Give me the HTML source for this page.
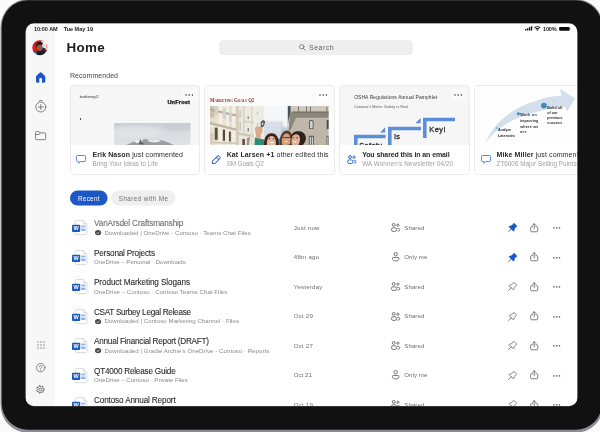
<!DOCTYPE html>
<html lang="en"><head><meta charset="utf-8"><title>Home</title>
<style>
*{margin:0;padding:0;box-sizing:border-box}
html,body{width:600px;height:432px;overflow:hidden}
body{background:#fafafa;font-family:"Liberation Sans",sans-serif;position:relative;color:#222}
.abs{position:absolute}
.t{position:absolute;white-space:nowrap;line-height:1}
#screen{position:absolute;left:25px;top:23px;width:553px;height:384px;background:#fff;overflow:hidden}
#in{position:absolute;left:-25px;top:-23px;width:600px;height:432px;will-change:transform}
#side{position:absolute;left:25px;top:23px;width:29.8px;height:384px;background:#f7f7f7}
.card{position:absolute;top:84.65px;width:130.3px;height:90.25px;border-radius:4px;background:#fff;overflow:hidden}
.card:after{content:'';position:absolute;left:0;top:0;right:0;bottom:0;border:.8px solid #ebebeb;border-radius:4px}
.ci{position:absolute;left:.35px;top:.85px;width:130px;height:90px}
.thumb{position:absolute;left:0;top:0;width:100%;height:60.1px;background:#f6f6f6;overflow:hidden}
.pill{position:absolute;top:190.5px;height:15px;border-radius:7.5px}
svg{position:absolute;overflow:visible}
</style></head>
<body>
<div id="screen"><div id="in">
<div id="side"></div>
<div class="t" id="st1" style="left:34px;top:26.85px;font-size:5.5px;color:#1a1a1a;font-weight:700;letter-spacing:-0.037px;">10:00 AM</div>
<div class="t" id="st2" style="left:63.7px;top:26.85px;font-size:5.5px;color:#1a1a1a;font-weight:700;letter-spacing:0.005px;">Tue May 19</div>
<div class="t" id="st3" style="left:543px;top:26.85px;font-size:5.5px;color:#1a1a1a;font-weight:700;letter-spacing:-0.123px;">100%</div>
<svg style="left:525px;top:26.2px" width="8" height="5" viewBox="0 0 8 5"><g fill="#111"><rect x="0" y="3" width="1.4" height="1.6" rx=".3"/><rect x="1.95" y="2.2" width="1.4" height="2.4" rx=".3"/><rect x="3.9" y="1.2" width="1.4" height="3.4" rx=".3"/><rect x="5.85" y="0.2" width="1.4" height="4.4" rx=".3"/></g></svg>
<svg style="left:534.4px;top:26.2px" width="6.6" height="5" viewBox="0 0 13.2 10"><g fill="none" stroke="#111" stroke-width="2.1" stroke-linecap="butt"><path d="M1 3.7 A8 8 0 0 1 12.2 3.7"/><path d="M3.3 6.1 A4.8 4.8 0 0 1 9.9 6.1"/></g><path d="M6.6 10 L4.5 7.7 A3 3 0 0 1 8.7 7.7 Z" fill="#111"/></svg>
<svg style="left:558.6px;top:27.2px" width="13" height="4" viewBox="0 0 13 4"><rect x="0.1" y="0.1" width="10.6" height="3.7" rx="1" fill="#0a0a0a"/><path d="M11.1 1.2 a.9 .9 0 0 1 0 1.5z" fill="#777"/></svg>
<svg style="left:32px;top:39.5px" width="15.6" height="15.6" viewBox="0 0 31.2 31.2">
<defs><clipPath id="avc"><circle cx="15.6" cy="15.6" r="15"/></clipPath><filter id="avb"><feGaussianBlur stdDeviation="0.9"/></filter></defs>
<circle cx="15.6" cy="15.6" r="15.6" fill="#ececec"/>
<g clip-path="url(#avc)"><g filter="url(#avb)">
<rect x="0" y="0" width="32" height="32" fill="#e2141c"/>
<path d="M18 2 L28 4 L30 20 L22 17 Z" fill="#f2f2f2"/>
<path d="M8 10 C9 2 21 1 22.6 9 L22.6 15 L8.6 15 Z" fill="#1b1412"/>
<ellipse cx="15.2" cy="16" rx="5.6" ry="6.8" fill="#8f5d48"/>
<path d="M9.8 17 C10.6 21 12 22 15 22 C18 22 19.8 21 20.6 17 L20.6 22 C18 28 12 27.6 9.8 22 Z" fill="#2a1a14"/>
<path d="M19.6 8 L25 9 L26 21 L21.4 19 Z" fill="#d8d8dc"/>
<path d="M21 15 L27 17 L28 30 L19 29 Z" fill="#1d2a3e"/>
<path d="M5 23 L13 25 L19 25 L25 23 L27 32 L3 32 Z" fill="#15181f"/>
<path d="M4.6 24 L9 23.4 L10.4 28 L6 29 Z" fill="#2f7fc4"/>
</g></g></svg>
<svg style="left:35.8px;top:72px" width="9.3" height="10.7" preserveAspectRatio="none" viewBox="0 0 19.6 21.4"><path d="M9.8 0.4 C8.9 0.4 8.3 0.8 7.6 1.4 L1.6 6.8 C0.6 7.7 0 8.7 0 10.2 V18.6 C0 20.3 1.1 21.4 2.8 21.4 H5 C6.4 21.4 7 20.6 7 19.4 V13.6 C7 12.6 7.6 12 8.6 12 H11 C12 12 12.6 12.6 12.6 13.6 V19.4 C12.6 20.6 13.2 21.4 14.6 21.4 H16.8 C18.5 21.4 19.6 20.3 19.6 18.6 V10.2 C19.6 8.7 19 7.7 18 6.8 L12 1.4 C11.3 0.8 10.7 0.4 9.8 0.4 Z" fill="#1b57c6"/></svg>
<svg style="left:35px;top:100.2px" width="11.6" height="12.6" viewBox="0 0 23.2 25.2"><g fill="none" stroke="#5a5a5a" stroke-width="1.5" stroke-linecap="round"><circle cx="11.6" cy="14" r="10"/><path d="M11.6 9.2 V18.8 M6.8 14 H16.4"/><path d="M8.6 1.6 C10.4 0.7 12.8 0.7 14.6 1.6"/></g></svg>
<svg style="left:35px;top:131.2px" width="11.2" height="9.2" preserveAspectRatio="none" viewBox="0 0 23.6 18.4"><path d="M1 3 C1 1.9 1.9 1 3 1 H8.2 L10.6 3.8 H20.6 C21.7 3.8 22.6 4.7 22.6 5.8 V15.4 C22.6 16.5 21.7 17.4 20.6 17.4 H3 C1.9 17.4 1 16.5 1 15.4 Z M1 7 H9 L11 4" fill="none" stroke="#5a5a5a" stroke-width="1.5" stroke-linejoin="round"/></svg>
<svg style="left:36.8px;top:341.3px" width="8" height="8" viewBox="0 0 16 16"><g fill="#707070"><circle cx="2" cy="2" r="1.35"/><circle cx="2" cy="8" r="1.35"/><circle cx="2" cy="14" r="1.35"/><circle cx="8" cy="2" r="1.35"/><circle cx="8" cy="8" r="1.35"/><circle cx="8" cy="14" r="1.35"/><circle cx="14" cy="2" r="1.35"/><circle cx="14" cy="8" r="1.35"/><circle cx="14" cy="14" r="1.35"/></g></svg>
<svg style="left:36.1px;top:362.9px" width="9.4" height="9.4" viewBox="0 0 18.8 18.8"><g fill="none" stroke="#5a5a5a" stroke-width="1.4" stroke-linecap="round"><circle cx="9.4" cy="9.4" r="8.4"/><path d="M6.9 7.4 C6.9 4.2 11.9 4.2 11.9 7.3 C11.9 9.3 9.4 9.3 9.4 11.4"/></g><circle cx="9.4" cy="13.9" r="1" fill="#5a5a5a"/></svg>
<svg style="left:36.2px;top:385.3px" width="8.8" height="8.8" viewBox="0 0 20 20"><g fill="none" stroke="#5a5a5a" stroke-width="1.9" stroke-linejoin="round"><path d="M18.70 8.68 L18.70 11.32 L16.12 11.88 L15.29 13.61 L16.45 15.98 L14.40 17.62 L12.34 15.96 L10.48 16.38 L9.35 18.78 L6.78 18.19 L6.80 15.54 L5.31 14.35 L2.73 14.96 L1.59 12.59 L3.67 10.96 L3.67 9.04 L1.59 7.41 L2.73 5.04 L5.31 5.65 L6.80 4.46 L6.78 1.81 L9.35 1.22 L10.48 3.62 L12.34 4.04 L14.40 2.38 L16.45 4.02 L15.29 6.39 L16.12 8.12 Z"/><circle cx="10" cy="10" r="3"/></g></svg>
<div class="t" id="home" style="left:66.4px;top:41.10px;font-size:13.4px;color:#1d1d1d;font-weight:700;letter-spacing:0.331px;">Home</div>
<div class="abs" style="left:219.2px;top:39.7px;width:194px;height:15.2px;border-radius:4.5px;background:#efefef"></div>
<svg style="left:298.8px;top:44px" width="6.8" height="6.8" viewBox="0 0 13.2 13.2"><g fill="none" stroke="#6a6a6a" stroke-width="1.5" stroke-linecap="round"><circle cx="5.4" cy="5.4" r="4.2"/><path d="M8.6 8.6 L12.2 12.2"/></g></svg>
<div class="t" id="search" style="left:309px;top:44.25px;font-size:7px;color:#5e5e5e;font-weight:400;letter-spacing:0.482px;">Search</div>
<div class="t" id="reco" style="left:70px;top:71.65px;font-size:7px;color:#444;font-weight:400;letter-spacing:0.052px;">Recommended</div>
<div class="card" style="left:69.65px;width:130.3px"><div class="thumb" style="background:#f6f6f6"><div class="ci">
<div class="t" id="c1a" style="left:9.7px;top:11.30px;font-size:2.6px;color:#333;font-weight:400;letter-spacing:-0.008px;">brandhomepg12</div>
<div class="abs" style="left:112.3px;top:3.8px;width:14.4px;height:11.4px;border-radius:3px;background:#fafafa"></div>
<div class="t" id="c1b" style="left:97.4px;top:14.50px;font-size:5.6px;color:#111;font-weight:700;letter-spacing:0.193px;-webkit-text-stroke:.25px #111;">UnFrost</div>
<div class="abs" style="left:9.6px;top:33px;width:.8px;height:1.6px;background:#555"></div>
<svg style="left:44px;top:37.8px" width="76.4" height="23" viewBox="0 0 76.4 23"><defs>
<linearGradient id="sky1" x1="0" y1="0" x2="0" y2="1"><stop offset="0" stop-color="#cbcfd3"/><stop offset=".5" stop-color="#dadde0"/><stop offset="1" stop-color="#e0e3e6"/></linearGradient>
<filter id="b1" x="-10%" y="-10%" width="120%" height="120%"><feGaussianBlur stdDeviation="1.2"/></filter><filter id="b1m" x="-10%" y="-10%" width="120%" height="120%"><feGaussianBlur stdDeviation=".5"/></filter><clipPath id="cp1"><rect width="76.4" height="23"/></clipPath></defs>
<rect width="76.4" height="23" fill="url(#sky1)"/>
<g clip-path="url(#cp1)"><g filter="url(#b1)">
<ellipse cx="22" cy="9" rx="26" ry="6" fill="#e4e6e9" opacity=".6"/><ellipse cx="66" cy="3" rx="18" ry="5" fill="#c6cacf" opacity=".6"/>
</g><g filter="url(#b1m)"><path d="M12 22 L20 18.6 L26 15.4 L29 16.6 L33 15.8 L38 17.6 L44 16.4 L52 18.6 L60 22 Z" fill="#9a9ea3"/>
<path d="M20 18.6 L26 15.4 L29 16.6 L27 19 L23 20 Z" fill="#f4f5f6"/>
<path d="M33 15.8 L38 17.6 L44 16.4 L47 18.4 L40 19.6 L35 18.6 Z" fill="#eceef0"/>
<path d="M26 15.6 L28 19.6 L31 21.2 L25 21.2 Z" fill="#5d6166"/>
</g></g></svg>
<svg style="left:114.8px;top:8.6px" width="8.4" height="2" viewBox="0 0 8.4 2"><g fill="#222"><circle cx="1" cy="1" r=".72"/><circle cx="4.2" cy="1" r=".72"/><circle cx="7.4" cy="1" r=".72"/></g></svg>
</div></div><div class="ci">
<svg style="left:6px;top:69.6px" width="10" height="9" viewBox="0 0 20 18"><path d="M3 1 H17 C18.1 1 19 1.9 19 3 V11 C19 12.1 18.1 13 17 13 H9.5 L5.5 16.6 V13 H3 C1.9 13 1 12.1 1 11 V3 C1 1.9 1.9 1 3 1 Z" fill="none" stroke="#3369cf" stroke-width="1.6" stroke-linejoin="round"/></svg>
<div class="t" id="c1t" style="left:22.5px;top:65.35px;font-size:7px;color:#2a2a2a;font-weight:400;letter-spacing:0.107px;"><b>Erik Nason</b> just commented</div>
<div class="t" id="c1s" style="left:22.5px;top:75.33px;font-size:6.3px;color:#a0a0a0;font-weight:400;letter-spacing:0.016px;">Bring Your Ideas to Life</div>
</div></div>
<div class="card" style="left:204.3px;width:130.3px"><div class="thumb" style="background:#fbfbfb"><div class="ci">
<div class="t" id="c2a" style="left:5.85px;top:11.80px;font-size:7px;color:#8a2d29;font-weight:700;letter-spacing:-0.038px;font-family:'Liberation Serif',serif;transform-origin:0 50%;transform:scaleX(0.683);">M<span style="font-size:5px">ARKETING</span> G<span style="font-size:5px">OALS</span> Q2</div>
<div class="abs" style="left:112.3px;top:3.8px;width:14.4px;height:11.4px;border-radius:3px;background:#fff"></div>
<svg style="left:114.8px;top:8.6px" width="8.4" height="2" viewBox="0 0 8.4 2"><g fill="#222"><circle cx="1" cy="1" r=".72"/><circle cx="4.2" cy="1" r=".72"/><circle cx="7.4" cy="1" r=".72"/></g></svg>
<svg style="left:5.5px;top:20.8px" width="118.8" height="40" viewBox="0 0 118.8 40"><defs>
<filter id="pb" x="-5%" y="-5%" width="110%" height="110%"><feGaussianBlur stdDeviation=".6"/></filter>
<filter id="pb2" x="-5%" y="-5%" width="110%" height="110%"><feGaussianBlur stdDeviation=".9"/></filter>
<clipPath id="pc"><rect width="118.8" height="40"/></clipPath>
<linearGradient id="bl1" x1="0" y1="0" x2="1" y2="0"><stop offset="0" stop-color="#e6decd"/><stop offset=".5" stop-color="#ece6d8"/><stop offset="1" stop-color="#e3dccb"/></linearGradient>
<linearGradient id="bl2" x1="0" y1="0" x2="1" y2="0"><stop offset="0" stop-color="#e9e4d7"/><stop offset="1" stop-color="#eeece6"/></linearGradient>
</defs>
<g clip-path="url(#pc)">
<rect width="118.8" height="40" fill="#f5f6f7"/>
<g filter="url(#pb2)">
<!-- far pale blue building -->
<rect x="53" y="15.5" width="20" height="26" fill="#d3dae4"/>
<rect x="71" y="21" width="8" height="20" fill="#bccada"/>
<g fill="#e6ebf1"><rect x="56" y="18" width="2" height="2.4"/><rect x="60" y="18" width="2" height="2.4"/><rect x="64" y="18" width="2" height="2.4"/><rect x="68" y="18" width="2" height="2.4"/><rect x="56" y="23" width="2" height="2.4"/><rect x="60" y="23" width="2" height="2.4"/><rect x="64" y="23" width="2" height="2.4"/><rect x="68" y="23" width="2" height="2.4"/></g>
</g>
<g filter="url(#pb)">
<!-- left buildings -->
<path d="M44 0 H54 V40 H44 Z" fill="#ecebe6"/>
<path d="M25 0 H46 V40 H25 Z" fill="url(#bl2)"/>
<path d="M0 0 H26.5 V40 H0 Z" fill="url(#bl1)"/>
<g fill="#f4f0e7"><rect x="9" y="0" width="3" height="40"/><rect x="16.4" y="0" width="2.4" height="40"/><rect x="22.2" y="0" width="3" height="40"/></g>
<path d="M0 0 H4.4 V12 L0 11 Z" fill="#cdc1ab"/>
<path d="M0 27 H3.6 V35 H0 Z" fill="#d6ccb8"/>
<!-- cornice shadows bldg1 -->
<path d="M0 2.4 L26.5 8.4 V10.4 L0 4.8 Z" fill="#b9ad97"/>
<path d="M0 15.8 L26.5 22.6 V25 L0 18.6 Z" fill="#c4b8a3"/>
<path d="M0 19 L26.5 25.2 V26.4 L0 20.4 Z" fill="#f3eee4"/>
<path d="M0 35.6 L26.5 36.6 V38 L0 37.2 Z" fill="#cfc4b0"/>
<!-- upper windows -->
<g fill="#d0d3d1"><path d="M5 0 H8 V9.6 L5 9 Z"/><path d="M12.8 2.6 H16 V13 L12.8 12.2 Z"/><path d="M19 6.6 H21.6 V15.6 L19 15 Z"/></g>
<!-- lower dark windows -->
<g fill="#5a4c3e"><path d="M4.8 21.6 H7.6 V33.8 H4.8 Z"/><path d="M12.8 23.6 H15 V34.8 H12.8 Z"/><path d="M18.9 25.6 H20.8 V35.4 H18.9 Z"/></g>
<!-- bldg2 details -->
<path d="M26.5 0 H28.6 V40 H26.5 Z" fill="#d1c8b6"/>
<path d="M26.5 26 L44 29 V31.4 L26.5 28.6 Z" fill="#cfc6b4"/>
<path d="M33 0 H34.6 V26 H33 Z" fill="#d9d2c3"/>
<path d="M29.4 4 H31 V12 H29.4 Z" fill="#cfc9bc"/><path d="M29.4 16 H31 V24 H29.4 Z" fill="#cfc9bc"/>
<path d="M41 0 H42.4 V40 H41 Z" fill="#dcd8cc"/>
<path d="M34.6 14.4 L44 16 V17.6 L34.6 16 Z" fill="#d4cdbd"/>
<g fill="#7d8188"><rect x="37.6" y="10.6" width="1.3" height="2.4"/><rect x="37.6" y="22" width="1.3" height="3.6"/></g>
<path d="M32.4 33 H34.8 V40 H32.4 Z" fill="#4f463b"/>
<path d="M37 32 L40 31 L39 40 H36.6 Z" fill="#a39783"/>
<g fill="#c9c9c6"><rect x="47" y="6" width="1.2" height="3"/><rect x="47" y="17" width="1.2" height="3"/></g>
<!-- right building -->
<path d="M80 0 H118.8 V40 H84 L80 26 Z" fill="#bfb8aa"/>
<path d="M80 0 H118.8 V6.6 H80 Z" fill="#cfc9bd"/>
<path d="M77.8 0 H80.6 V7 L78.6 14 L77.8 22 Z" fill="#4a5160"/>
<path d="M80 6.2 H118.8 V11.8 H86 L80.6 24 L78.4 25 Z" fill="#8d8678"/>
<path d="M82 5.4 H118.8 V6.8 H82 Z" fill="#6f6a60"/>
<g fill="#77726a"><rect x="88" y="0.6" width="1" height="5"/><rect x="96" y="0.6" width="1" height="5"/><rect x="100" y="0.6" width="1" height="5"/><rect x="116.4" y="0.6" width="1" height="5"/></g>
<!-- windows -->
<path d="M99 15.4 C99 13.4 103.6 13.4 103.6 15.4 V23 H99 Z" fill="#5a554e"/>
<path d="M99.9 15.8 C99.9 14.6 102.7 14.6 102.7 15.8 V22.2 H99.9 Z" fill="#d2d2d0"/>
<path d="M116.7 15.4 C116.7 13.6 118.8 13.6 118.8 14 V23 H116.7 Z" fill="#4e4a44"/>
<rect x="98.8" y="29.8" width="5.2" height="10.2" fill="#4e4a44"/>
<rect x="99.7" y="30.7" width="1.4" height="9.3" fill="#cfcfcd"/><rect x="101.8" y="30.7" width="1.4" height="9.3" fill="#cfcfcd"/>
<rect x="116.6" y="29.8" width="2.2" height="10.2" fill="#4e4a44"/><rect x="117.3" y="30.7" width="1" height="9.3" fill="#d4d4d2"/>
<!-- arm + camera -->
<path d="M44.9 31.4 L54 33.4 L54.4 40 H44.4 Z" fill="#2f8f70"/>
<path d="M46.4 32 L45 23.6 C44.8 21 46.6 20 48.6 20.4 L52.6 21.4 L52.4 26.4 L51 27.6 L50.6 32.8 Z" fill="#d8ab91"/>
<path d="M50.6 16.4 L52.6 14 L55.2 15.2 L53.8 20.6 L50.8 21.4 Z" fill="#55514f"/>
<path d="M51.8 16.8 L53.6 16.2 L53 19.2 L51.6 19.6 Z" fill="#d5d1ce"/>
<!-- people -->
<path d="M67.4 32.6 H71.4 V40 H67.4 Z" fill="#3a8fc0"/>
<!-- woman -->
<path d="M54.2 40 C53.4 33 56 27.4 61.4 27.2 C66.4 27 69.4 31.6 68.8 40 Z" fill="#3b2419"/>
<path d="M57 40 C56.2 34.6 58 30.2 61.4 30 C64.8 29.8 66.6 33.6 65.8 40 Z" fill="#e4b9a0"/>
<path d="M58.4 32.4 H60.4 V33.2 H58.4 Z M62.6 32.4 H64.6 V33.2 H62.6 Z" fill="#4a3026"/>
<path d="M59.6 36 H63.6 C63.4 37.4 60 37.4 59.6 36 Z" fill="#fff"/>
<!-- glasses person -->
<path d="M69.8 40 C69 32 71.4 25 76.6 24.6 C81.4 24.4 83 30 82.2 40 Z" fill="#5a3a26"/>
<path d="M72 38.4 C71.2 32.6 72.8 27.8 76.4 27.4 C79.8 27.2 81 31.6 80.2 37.2 C78.6 39.4 74 39.8 72 38.4 Z" fill="#d3a084"/>
<path d="M72.4 31 H79.8 V31.9 H72.4 Z" fill="#4a3428"/>
<path d="M74.4 35 H78 C77.8 36.2 74.8 36.2 74.4 35 Z" fill="#f6ece6"/>
<!-- man -->
<path d="M80.9 33 C80.4 27.6 84 25 89 25.2 C94 25.4 96.6 29.4 95.8 33.6 C95.2 36.6 93.4 38.8 92 40 H84 C82.4 38.6 81.2 35.8 80.9 33 Z" fill="#2d221d"/>
<path d="M81.6 37.6 C81 32.6 82 28.8 85.2 28.4 C88.2 28 90.2 29.8 90 33.4 C89.8 36.6 88.6 38.8 87.6 40 H82.8 Z" fill="#e0b297"/>
<path d="M82.6 31.6 H84.4 V32.3 H82.6 Z M86 31.6 H88 V32.3 H86 Z" fill="#4a3026"/>
<path d="M83 35.6 H86.6 C86.4 36.8 83.4 36.8 83 35.6 Z" fill="#fff"/>
</g></g></svg>
</div></div><div class="ci">
<svg style="left:6.85px;top:69.5px" width="10" height="10" viewBox="-5 -5 10 10"><g transform="rotate(-45)" fill="none" stroke="#3369cf" stroke-width=".95" stroke-linejoin="round"><path d="M-5.2 0 L-3 -1.7 H3.5 A1.4 1.4 0 0 1 4.9 -.3 V.3 A1.4 1.4 0 0 1 3.5 1.7 H-3 Z M2.2 -1.7 V1.7"/></g></svg>
<div class="t" id="c2t" style="left:22px;top:65.35px;font-size:7px;color:#2a2a2a;font-weight:400;letter-spacing:0.137px;"><b>Kat Larsen +1</b> other edited this</div>
<div class="t" id="c2s" style="left:22px;top:75.33px;font-size:6.3px;color:#a0a0a0;font-weight:400;letter-spacing:-0.080px;">SM Goals Q2</div>
</div></div>
<div class="card" style="left:339.3px;width:130.3px"><div class="thumb" style="background:#f6f6f6"><div class="ci">
<div class="t" id="c3a" style="left:14.5px;top:10.15px;font-size:4.9px;color:#333;font-weight:400;letter-spacing:0.125px;">OSHA Regulations Annual Pamphlet</div>
<div class="t" id="c3b" style="left:14.5px;top:20.95px;font-size:3.3px;color:#444;font-weight:400;letter-spacing:0.270px;">Contoso's Motto: Safety is Real</div>
<div class="abs" style="left:112.3px;top:3.8px;width:14.4px;height:11.4px;border-radius:3px;background:#fafafa"></div>
<svg style="left:114.8px;top:8.6px" width="8.4" height="2" viewBox="0 0 8.4 2"><g fill="#222"><circle cx="1" cy="1" r=".72"/><circle cx="4.2" cy="1" r=".72"/><circle cx="7.4" cy="1" r=".72"/></g></svg>
<svg style="left:0;top:.6px" width="129" height="59" viewBox="0 0 129 59"><g fill="#5b8fd9">
<path d="M83 31.8 H115 V35.2 H86.6 V52 H83 Z"/>
<path d="M80.6 32 V37.2 H75.4 Z"/>
<path d="M48 40.8 H81 V44.2 H51.6 V59 H48 Z"/>
<path d="M45.2 41.2 V46.4 H40 Z"/>
<path d="M14 48.8 H45.6 V52.2 H17.6 V59 H14 Z"/>
</g></svg>
<div class="t" id="c3k" style="left:89.6px;top:40.40px;font-size:7.4px;color:#2c2c2c;font-weight:400;letter-spacing:0.537px;-webkit-text-stroke:.3px #2c2c2c;">Key!</div>
<div class="t" id="c3i" style="left:54.6px;top:47.90px;font-size:7.4px;color:#2c2c2c;font-weight:400;letter-spacing:0.258px;-webkit-text-stroke:.3px #2c2c2c;">is</div>
<div class="t" id="c3f" style="left:19.6px;top:56.60px;font-size:7.4px;color:#2c2c2c;font-weight:400;letter-spacing:0.327px;-webkit-text-stroke:.3px #2c2c2c;">Safety</div>
</div></div><div class="ci">
<svg style="left:7.1px;top:69.3px" width="9.4" height="9.2" viewBox="0 0 18.8 18.4"><g fill="none" stroke="#3369cf" stroke-width="2"><circle cx="6" cy="4" r="2.9"/><circle cx="14" cy="4.4" r="2.3"/><rect x="1" y="9.8" width="11" height="7.4" rx="3.5"/><path d="M13.4 10.8 H15 C16.8 10.8 17.8 12 17.8 13.4 C17.8 15 16.8 16.2 15 16.2 H13.8"/></g></svg>
<div class="t" id="c3t" style="left:22.5px;top:65.35px;font-size:7px;color:#2a2a2a;font-weight:400;letter-spacing:-0.101px;"><b>You shared this in an email</b></div>
<div class="t" id="c3s" style="left:22.5px;top:75.33px;font-size:6.3px;color:#a0a0a0;font-weight:400;letter-spacing:0.110px;">WA Wonnen's Newsletter 04/20</div>
</div></div>
<div class="card" style="left:474.2px;width:129.5px"><div class="thumb" style="background:#fefefe"><div class="ci">
<svg style="left:0;top:0" width="129" height="59" viewBox="0 0 129 59"><defs><filter id="b4"><feGaussianBlur stdDeviation=".3"/></filter></defs>
<path filter="url(#b4)" d="M10.2 58 C14 50 18 44 22.2 39.3 C27 34 32 30 37.5 26.6 C43 23 48.5 20.4 54.5 18.1 C60 16 65.5 14 71.5 12.4 C77 11.2 82 10.6 86.8 10.4 L84.7 3.6 L99.9 13.5 L92.2 26.6 L89.3 21 C83 22 77 23 71.5 24.4 C65.5 25.8 60 27.2 54.5 29.1 C48.5 31 43 33 37.5 35.4 C32 38 27 41.4 22.2 45.3 C18 48.6 14 53 10.2 58 Z" fill="#d3dfea"/>
<circle cx="68.9" cy="20.6" r="2.9" fill="#3f8ac0"/><circle cx="43.4" cy="28.8" r="1.5" fill="#3f8ac0"/><circle cx="21.8" cy="43" r=".65" fill="#3f8ac0"/>
</svg>
<div class="t" id="c4a0" style="left:23.5px;top:44.00px;font-size:3.6px;color:#2a2a2a;font-weight:700;letter-spacing:-0.098px;">Analyze</div>
<div class="t" id="c4a1" style="left:23.5px;top:49.10px;font-size:3.6px;color:#2a2a2a;font-weight:700;letter-spacing:0.052px;">Latencies</div>
<div class="t" id="c4b0" style="left:45.6px;top:29.00px;font-size:3.6px;color:#2a2a2a;font-weight:700;letter-spacing:0.365px;">Work on</div>
<div class="t" id="c4b1" style="left:45.6px;top:34.50px;font-size:3.6px;color:#2a2a2a;font-weight:700;letter-spacing:0.102px;">improving</div>
<div class="t" id="c4b2" style="left:45.6px;top:40.10px;font-size:3.6px;color:#2a2a2a;font-weight:700;letter-spacing:0.287px;">where we</div>
<div class="t" id="c4b3" style="left:45.6px;top:45.20px;font-size:3.6px;color:#2a2a2a;font-weight:700;letter-spacing:0.450px;">are</div>
<div class="t" id="c4c0" style="left:72.8px;top:21.40px;font-size:3.6px;color:#2a2a2a;font-weight:700;letter-spacing:0.079px;">Build off</div>
<div class="t" id="c4c1" style="left:72.8px;top:26.50px;font-size:3.6px;color:#2a2a2a;font-weight:700;letter-spacing:0.003px;">of our</div>
<div class="t" id="c4c2" style="left:72.8px;top:31.60px;font-size:3.6px;color:#2a2a2a;font-weight:700;letter-spacing:0.032px;">previous</div>
<div class="t" id="c4c3" style="left:72.8px;top:37.00px;font-size:3.6px;color:#2a2a2a;font-weight:700;letter-spacing:0.102px;">success</div>
</div></div><div class="ci">
<svg style="left:6px;top:69.6px" width="10" height="9" viewBox="0 0 20 18"><path d="M3 1 H17 C18.1 1 19 1.9 19 3 V11 C19 12.1 18.1 13 17 13 H9.5 L5.5 16.6 V13 H3 C1.9 13 1 12.1 1 11 V3 C1 1.9 1.9 1 3 1 Z" fill="none" stroke="#3369cf" stroke-width="1.6" stroke-linejoin="round"/></svg>
<div class="t" id="c4t" style="left:22px;top:65.35px;font-size:7px;color:#2a2a2a;font-weight:400;letter-spacing:0.114px;"><b>Mike Miller</b> just commented</div>
<div class="t" id="c4s" style="left:22px;top:75.33px;font-size:6.3px;color:#a0a0a0;font-weight:400;letter-spacing:0.035px;">ZT6006 Major Selling Points</div>
</div></div>
<svg style="left:0;top:0" width="600" height="432" viewBox="0 0 600 432"><rect x="70" y="190.4" width="37.6" height="15.2" rx="7.6" fill="#1b57c6"/><rect x="111.2" y="190.4" width="64.4" height="15.2" rx="7.6" fill="#efefef"/></svg>
<div class="t" id="tab1" style="left:78px;top:195.69px;font-size:6.3px;color:#fff;font-weight:400;letter-spacing:0.309px;">Recent</div>
<div class="t" id="tab2" style="left:118.8px;top:195.69px;font-size:6.3px;color:#707070;font-weight:400;letter-spacing:0.419px;">Shared with Me</div>
<svg style="left:71.6px;top:220.30px" width="15.6" height="15" viewBox="0 0 15.6 15">
<path d="M4.4 .4 H11.3 L14.9 4 V13.6 C14.9 14.2 14.5 14.6 13.9 14.6 H4.4 C3.8 14.6 3.4 14.2 3.4 13.6 V1.4 C3.4 .8 3.8 .4 4.4 .4 Z" fill="#fff" stroke="#cbcbcb" stroke-width=".7"/>
<path d="M11.3 .4 V3 C11.3 3.6 11.7 4 12.3 4 H14.9" fill="#f3f3f3" stroke="#cbcbcb" stroke-width=".7" stroke-linejoin="round"/>
<rect x="9.2" y="5.6" width="4.2" height="1.3" fill="#7fb0ea"/><rect x="9.2" y="7.4" width="4.2" height="1.3" fill="#b5d2f4"/><rect x="9.2" y="9.4" width="4.2" height="1.2" fill="#3f7fd6"/>
<rect x="0" y="4.7" width="8.2" height="7.2" rx=".9" fill="#1b5cbe"/>
<text x="4.1" y="10.4" font-family="Liberation Sans, sans-serif" font-size="5.6" font-weight="700" fill="#fff" text-anchor="middle">W</text>
</svg>
<div class="t" id="r0t" style="left:94px;top:220.40px;font-size:8.2px;color:#6e6e6e;font-weight:400;letter-spacing:-0.133px;-webkit-text-stroke:.1px #6e6e6e;">VanArsdel Craftsmanship</div>
<svg style="left:94.8px;top:230.10px" width="6.2" height="5.2" viewBox="0 0 12.4 10.4"><ellipse cx="6.2" cy="5.2" rx="6.2" ry="5.2" fill="#4a4a4a"/><path d="M3.4 5.4 L5.4 7.4 L9 3.4" fill="none" stroke="#fff" stroke-width="1.5"/></svg>
<div class="t" id="r0s" style="left:104.4px;top:229.63px;font-size:6.1px;color:#8a8a8a;font-weight:400;letter-spacing:0.025px;">Downloaded | OneDrive - Contoso &middot; Teams Chat Files</div>
<div class="t" id="r0d" style="left:293.8px;top:224.83px;font-size:6.1px;color:#6c6c6c;font-weight:400;letter-spacing:0.235px;">Just now</div>
<svg style="left:390.6px;top:223.00px" width="9.2" height="8.8" viewBox="0 0 18.4 17.6"><g fill="none" stroke="#5e5e5e" stroke-width="1.7"><circle cx="5.4" cy="3.8" r="2.9"/><circle cx="13.8" cy="4.4" r="2.2"/><rect x=".8" y="9.6" width="10.4" height="7.2" rx="3.4"/><path d="M12.4 10.8 H15 C16.6 10.8 17.6 12 17.6 13.4 C17.6 15 16.6 16.2 15 16.2 H13"/></g></svg>
<div class="t" id="r0h" style="left:404.3px;top:224.83px;font-size:6.1px;color:#6c6c6c;font-weight:400;letter-spacing:0.068px;">Shared</div>
<svg style="left:507.9px;top:223.10px" width="9.2" height="9.2" viewBox="0 0 19.2 19.2"><path d="M11.6 1.2 C12.2 .6 13 .6 13.6 1.2 L18 5.6 C18.6 6.2 18.6 7 18 7.6 L16.8 8.6 L13.4 12 L13 15.6 L11.4 17.2 L6.8 12.6 L1 18.4 L.8 18.2 L6.6 12.4 L2 7.8 L3.6 6.2 L7.2 5.8 L10.6 2.4 Z" fill="#1b57c6" stroke="#1b57c6" stroke-width="1" stroke-linejoin="round"/></svg>
<svg style="left:529.7px;top:222.90px" width="8.4" height="9.5" viewBox="0 0 18 20"><g fill="none" stroke="#5a5a5a" stroke-width="1.7" stroke-linecap="round" stroke-linejoin="round"><path d="M5.4 7.6 H3.4 C2.2 7.6 1.4 8.4 1.4 9.6 V16.6 C1.4 17.8 2.2 18.6 3.4 18.6 H14.6 C15.8 18.6 16.6 17.8 16.6 16.6 V9.6 C16.6 8.4 15.8 7.6 14.6 7.6 H12.6"/><path d="M9 12.6 V1.4 M5.4 4.8 L9 1.2 L12.6 4.8"/></g></svg>
<svg style="left:552.8px;top:227.20px" width="7.4" height="1.8" viewBox="0 0 7.4 1.8"><g fill="#666"><circle cx=".9" cy=".9" r=".8"/><circle cx="3.7" cy=".9" r=".8"/><circle cx="6.5" cy=".9" r=".8"/></g></svg>
<svg style="left:71.6px;top:249.80px" width="15.6" height="15" viewBox="0 0 15.6 15">
<path d="M4.4 .4 H11.3 L14.9 4 V13.6 C14.9 14.2 14.5 14.6 13.9 14.6 H4.4 C3.8 14.6 3.4 14.2 3.4 13.6 V1.4 C3.4 .8 3.8 .4 4.4 .4 Z" fill="#fff" stroke="#cbcbcb" stroke-width=".7"/>
<path d="M11.3 .4 V3 C11.3 3.6 11.7 4 12.3 4 H14.9" fill="#f3f3f3" stroke="#cbcbcb" stroke-width=".7" stroke-linejoin="round"/>
<rect x="9.2" y="5.6" width="4.2" height="1.3" fill="#7fb0ea"/><rect x="9.2" y="7.4" width="4.2" height="1.3" fill="#b5d2f4"/><rect x="9.2" y="9.4" width="4.2" height="1.2" fill="#3f7fd6"/>
<rect x="0" y="4.7" width="8.2" height="7.2" rx=".9" fill="#1b5cbe"/>
<text x="4.1" y="10.4" font-family="Liberation Sans, sans-serif" font-size="5.6" font-weight="700" fill="#fff" text-anchor="middle">W</text>
</svg>
<div class="t" id="r1t" style="left:94px;top:249.90px;font-size:8.2px;color:#2b2b2b;font-weight:400;letter-spacing:-0.199px;-webkit-text-stroke:.1px #2b2b2b;">Personal Projects</div>
<div class="t" id="r1s" style="left:94px;top:259.13px;font-size:6.1px;color:#8a8a8a;font-weight:400;letter-spacing:-0.015px;">OneDrive &ndash; Personal &middot; Downloads</div>
<div class="t" id="r1d" style="left:293.8px;top:254.33px;font-size:6.1px;color:#6c6c6c;font-weight:400;letter-spacing:0.262px;">48m ago</div>
<svg style="left:391.6px;top:252.20px" width="7.4" height="9.4" viewBox="0 0 14.8 18.8"><g fill="none" stroke="#5e5e5e" stroke-width="1.7"><circle cx="7.4" cy="4.4" r="3.4"/><path d="M2.6 11 H12.2 C13.4 11 14 11.8 14 12.8 C14 16 11.4 18 7.4 18 C3.4 18 .8 16 .8 12.8 C.8 11.8 1.4 11 2.6 11 Z"/></g></svg>
<div class="t" id="r1h" style="left:404.3px;top:254.33px;font-size:6.1px;color:#6c6c6c;font-weight:400;letter-spacing:0.052px;">Only me</div>
<svg style="left:507.9px;top:252.60px" width="9.2" height="9.2" viewBox="0 0 19.2 19.2"><path d="M11.6 1.2 C12.2 .6 13 .6 13.6 1.2 L18 5.6 C18.6 6.2 18.6 7 18 7.6 L16.8 8.6 L13.4 12 L13 15.6 L11.4 17.2 L6.8 12.6 L1 18.4 L.8 18.2 L6.6 12.4 L2 7.8 L3.6 6.2 L7.2 5.8 L10.6 2.4 Z" fill="#1b57c6" stroke="#1b57c6" stroke-width="1" stroke-linejoin="round"/></svg>
<svg style="left:529.7px;top:252.40px" width="8.4" height="9.5" viewBox="0 0 18 20"><g fill="none" stroke="#5a5a5a" stroke-width="1.7" stroke-linecap="round" stroke-linejoin="round"><path d="M5.4 7.6 H3.4 C2.2 7.6 1.4 8.4 1.4 9.6 V16.6 C1.4 17.8 2.2 18.6 3.4 18.6 H14.6 C15.8 18.6 16.6 17.8 16.6 16.6 V9.6 C16.6 8.4 15.8 7.6 14.6 7.6 H12.6"/><path d="M9 12.6 V1.4 M5.4 4.8 L9 1.2 L12.6 4.8"/></g></svg>
<svg style="left:552.8px;top:256.70px" width="7.4" height="1.8" viewBox="0 0 7.4 1.8"><g fill="#666"><circle cx=".9" cy=".9" r=".8"/><circle cx="3.7" cy=".9" r=".8"/><circle cx="6.5" cy=".9" r=".8"/></g></svg>
<svg style="left:71.6px;top:279.30px" width="15.6" height="15" viewBox="0 0 15.6 15">
<path d="M4.4 .4 H11.3 L14.9 4 V13.6 C14.9 14.2 14.5 14.6 13.9 14.6 H4.4 C3.8 14.6 3.4 14.2 3.4 13.6 V1.4 C3.4 .8 3.8 .4 4.4 .4 Z" fill="#fff" stroke="#cbcbcb" stroke-width=".7"/>
<path d="M11.3 .4 V3 C11.3 3.6 11.7 4 12.3 4 H14.9" fill="#f3f3f3" stroke="#cbcbcb" stroke-width=".7" stroke-linejoin="round"/>
<rect x="9.2" y="5.6" width="4.2" height="1.3" fill="#7fb0ea"/><rect x="9.2" y="7.4" width="4.2" height="1.3" fill="#b5d2f4"/><rect x="9.2" y="9.4" width="4.2" height="1.2" fill="#3f7fd6"/>
<rect x="0" y="4.7" width="8.2" height="7.2" rx=".9" fill="#1b5cbe"/>
<text x="4.1" y="10.4" font-family="Liberation Sans, sans-serif" font-size="5.6" font-weight="700" fill="#fff" text-anchor="middle">W</text>
</svg>
<div class="t" id="r2t" style="left:94px;top:279.40px;font-size:8.2px;color:#2b2b2b;font-weight:400;letter-spacing:-0.096px;-webkit-text-stroke:.1px #2b2b2b;">Product Marketing Slogans</div>
<div class="t" id="r2s" style="left:94px;top:288.63px;font-size:6.1px;color:#8a8a8a;font-weight:400;letter-spacing:0.030px;">OneDrive &ndash; Contoso &middot; Contoso Teams Chat Files</div>
<div class="t" id="r2d" style="left:293.8px;top:283.83px;font-size:6.1px;color:#6c6c6c;font-weight:400;letter-spacing:0.203px;">Yesterday</div>
<svg style="left:390.6px;top:282.00px" width="9.2" height="8.8" viewBox="0 0 18.4 17.6"><g fill="none" stroke="#5e5e5e" stroke-width="1.7"><circle cx="5.4" cy="3.8" r="2.9"/><circle cx="13.8" cy="4.4" r="2.2"/><rect x=".8" y="9.6" width="10.4" height="7.2" rx="3.4"/><path d="M12.4 10.8 H15 C16.6 10.8 17.6 12 17.6 13.4 C17.6 15 16.6 16.2 15 16.2 H13"/></g></svg>
<div class="t" id="r2h" style="left:404.3px;top:283.83px;font-size:6.1px;color:#6c6c6c;font-weight:400;letter-spacing:0.068px;">Shared</div>
<svg style="left:507.9px;top:282.10px" width="9" height="9" viewBox="0 0 19.2 19.2"><path d="M11.6 1.6 C12.2 1 13 1 13.6 1.6 L17.6 5.6 C18.2 6.2 18.2 7 17.6 7.6 L16.4 8.6 L13.2 11.8 L12.8 15.4 L11.4 16.8 L2.4 7.8 L3.8 6.4 L7.4 6 L10.6 2.8 Z M6.8 12.4 L1 18.2" fill="none" stroke="#5a5a5a" stroke-width="1.6" stroke-linejoin="round" stroke-linecap="round"/></svg>
<svg style="left:529.7px;top:281.90px" width="8.4" height="9.5" viewBox="0 0 18 20"><g fill="none" stroke="#5a5a5a" stroke-width="1.7" stroke-linecap="round" stroke-linejoin="round"><path d="M5.4 7.6 H3.4 C2.2 7.6 1.4 8.4 1.4 9.6 V16.6 C1.4 17.8 2.2 18.6 3.4 18.6 H14.6 C15.8 18.6 16.6 17.8 16.6 16.6 V9.6 C16.6 8.4 15.8 7.6 14.6 7.6 H12.6"/><path d="M9 12.6 V1.4 M5.4 4.8 L9 1.2 L12.6 4.8"/></g></svg>
<svg style="left:552.8px;top:286.20px" width="7.4" height="1.8" viewBox="0 0 7.4 1.8"><g fill="#666"><circle cx=".9" cy=".9" r=".8"/><circle cx="3.7" cy=".9" r=".8"/><circle cx="6.5" cy=".9" r=".8"/></g></svg>
<svg style="left:71.6px;top:308.80px" width="15.6" height="15" viewBox="0 0 15.6 15">
<path d="M4.4 .4 H11.3 L14.9 4 V13.6 C14.9 14.2 14.5 14.6 13.9 14.6 H4.4 C3.8 14.6 3.4 14.2 3.4 13.6 V1.4 C3.4 .8 3.8 .4 4.4 .4 Z" fill="#fff" stroke="#cbcbcb" stroke-width=".7"/>
<path d="M11.3 .4 V3 C11.3 3.6 11.7 4 12.3 4 H14.9" fill="#f3f3f3" stroke="#cbcbcb" stroke-width=".7" stroke-linejoin="round"/>
<rect x="9.2" y="5.6" width="4.2" height="1.3" fill="#7fb0ea"/><rect x="9.2" y="7.4" width="4.2" height="1.3" fill="#b5d2f4"/><rect x="9.2" y="9.4" width="4.2" height="1.2" fill="#3f7fd6"/>
<rect x="0" y="4.7" width="8.2" height="7.2" rx=".9" fill="#1b5cbe"/>
<text x="4.1" y="10.4" font-family="Liberation Sans, sans-serif" font-size="5.6" font-weight="700" fill="#fff" text-anchor="middle">W</text>
</svg>
<div class="t" id="r3t" style="left:94px;top:308.90px;font-size:8.2px;color:#2b2b2b;font-weight:400;letter-spacing:-0.288px;-webkit-text-stroke:.1px #2b2b2b;">CSAT Surbey Legal Release</div>
<svg style="left:94.8px;top:318.60px" width="6.2" height="5.2" viewBox="0 0 12.4 10.4"><ellipse cx="6.2" cy="5.2" rx="6.2" ry="5.2" fill="#4a4a4a"/><path d="M3.4 5.4 L5.4 7.4 L9 3.4" fill="none" stroke="#fff" stroke-width="1.5"/></svg>
<div class="t" id="r3s" style="left:104.4px;top:318.13px;font-size:6.1px;color:#8a8a8a;font-weight:400;letter-spacing:0.043px;">Downloaded | Contoso Marketing Channel &middot; Files</div>
<div class="t" id="r3d" style="left:293.8px;top:313.33px;font-size:6.1px;color:#6c6c6c;font-weight:400;letter-spacing:0.209px;">Oct 29</div>
<svg style="left:390.6px;top:311.50px" width="9.2" height="8.8" viewBox="0 0 18.4 17.6"><g fill="none" stroke="#5e5e5e" stroke-width="1.7"><circle cx="5.4" cy="3.8" r="2.9"/><circle cx="13.8" cy="4.4" r="2.2"/><rect x=".8" y="9.6" width="10.4" height="7.2" rx="3.4"/><path d="M12.4 10.8 H15 C16.6 10.8 17.6 12 17.6 13.4 C17.6 15 16.6 16.2 15 16.2 H13"/></g></svg>
<div class="t" id="r3h" style="left:404.3px;top:313.33px;font-size:6.1px;color:#6c6c6c;font-weight:400;letter-spacing:0.068px;">Shared</div>
<svg style="left:507.9px;top:311.60px" width="9" height="9" viewBox="0 0 19.2 19.2"><path d="M11.6 1.6 C12.2 1 13 1 13.6 1.6 L17.6 5.6 C18.2 6.2 18.2 7 17.6 7.6 L16.4 8.6 L13.2 11.8 L12.8 15.4 L11.4 16.8 L2.4 7.8 L3.8 6.4 L7.4 6 L10.6 2.8 Z M6.8 12.4 L1 18.2" fill="none" stroke="#5a5a5a" stroke-width="1.6" stroke-linejoin="round" stroke-linecap="round"/></svg>
<svg style="left:529.7px;top:311.40px" width="8.4" height="9.5" viewBox="0 0 18 20"><g fill="none" stroke="#5a5a5a" stroke-width="1.7" stroke-linecap="round" stroke-linejoin="round"><path d="M5.4 7.6 H3.4 C2.2 7.6 1.4 8.4 1.4 9.6 V16.6 C1.4 17.8 2.2 18.6 3.4 18.6 H14.6 C15.8 18.6 16.6 17.8 16.6 16.6 V9.6 C16.6 8.4 15.8 7.6 14.6 7.6 H12.6"/><path d="M9 12.6 V1.4 M5.4 4.8 L9 1.2 L12.6 4.8"/></g></svg>
<svg style="left:552.8px;top:315.70px" width="7.4" height="1.8" viewBox="0 0 7.4 1.8"><g fill="#666"><circle cx=".9" cy=".9" r=".8"/><circle cx="3.7" cy=".9" r=".8"/><circle cx="6.5" cy=".9" r=".8"/></g></svg>
<svg style="left:71.6px;top:338.30px" width="15.6" height="15" viewBox="0 0 15.6 15">
<path d="M4.4 .4 H11.3 L14.9 4 V13.6 C14.9 14.2 14.5 14.6 13.9 14.6 H4.4 C3.8 14.6 3.4 14.2 3.4 13.6 V1.4 C3.4 .8 3.8 .4 4.4 .4 Z" fill="#fff" stroke="#cbcbcb" stroke-width=".7"/>
<path d="M11.3 .4 V3 C11.3 3.6 11.7 4 12.3 4 H14.9" fill="#f3f3f3" stroke="#cbcbcb" stroke-width=".7" stroke-linejoin="round"/>
<rect x="9.2" y="5.6" width="4.2" height="1.3" fill="#7fb0ea"/><rect x="9.2" y="7.4" width="4.2" height="1.3" fill="#b5d2f4"/><rect x="9.2" y="9.4" width="4.2" height="1.2" fill="#3f7fd6"/>
<rect x="0" y="4.7" width="8.2" height="7.2" rx=".9" fill="#1b5cbe"/>
<text x="4.1" y="10.4" font-family="Liberation Sans, sans-serif" font-size="5.6" font-weight="700" fill="#fff" text-anchor="middle">W</text>
</svg>
<div class="t" id="r4t" style="left:94px;top:338.40px;font-size:8.2px;color:#2b2b2b;font-weight:400;letter-spacing:-0.247px;-webkit-text-stroke:.1px #2b2b2b;">Annual Financial Report (DRAFT)</div>
<svg style="left:94.8px;top:348.10px" width="6.2" height="5.2" viewBox="0 0 12.4 10.4"><ellipse cx="6.2" cy="5.2" rx="6.2" ry="5.2" fill="#4a4a4a"/><path d="M3.4 5.4 L5.4 7.4 L9 3.4" fill="none" stroke="#fff" stroke-width="1.5"/></svg>
<div class="t" id="r4s" style="left:104.4px;top:347.63px;font-size:6.1px;color:#8a8a8a;font-weight:400;letter-spacing:0.047px;">Downloaded | Gradie Archie's OneDrive - Contoso &middot; Reports</div>
<div class="t" id="r4d" style="left:293.8px;top:342.83px;font-size:6.1px;color:#6c6c6c;font-weight:400;letter-spacing:0.209px;">Oct 27</div>
<svg style="left:390.6px;top:341.00px" width="9.2" height="8.8" viewBox="0 0 18.4 17.6"><g fill="none" stroke="#5e5e5e" stroke-width="1.7"><circle cx="5.4" cy="3.8" r="2.9"/><circle cx="13.8" cy="4.4" r="2.2"/><rect x=".8" y="9.6" width="10.4" height="7.2" rx="3.4"/><path d="M12.4 10.8 H15 C16.6 10.8 17.6 12 17.6 13.4 C17.6 15 16.6 16.2 15 16.2 H13"/></g></svg>
<div class="t" id="r4h" style="left:404.3px;top:342.83px;font-size:6.1px;color:#6c6c6c;font-weight:400;letter-spacing:0.068px;">Shared</div>
<svg style="left:507.9px;top:341.10px" width="9" height="9" viewBox="0 0 19.2 19.2"><path d="M11.6 1.6 C12.2 1 13 1 13.6 1.6 L17.6 5.6 C18.2 6.2 18.2 7 17.6 7.6 L16.4 8.6 L13.2 11.8 L12.8 15.4 L11.4 16.8 L2.4 7.8 L3.8 6.4 L7.4 6 L10.6 2.8 Z M6.8 12.4 L1 18.2" fill="none" stroke="#5a5a5a" stroke-width="1.6" stroke-linejoin="round" stroke-linecap="round"/></svg>
<svg style="left:529.7px;top:340.90px" width="8.4" height="9.5" viewBox="0 0 18 20"><g fill="none" stroke="#5a5a5a" stroke-width="1.7" stroke-linecap="round" stroke-linejoin="round"><path d="M5.4 7.6 H3.4 C2.2 7.6 1.4 8.4 1.4 9.6 V16.6 C1.4 17.8 2.2 18.6 3.4 18.6 H14.6 C15.8 18.6 16.6 17.8 16.6 16.6 V9.6 C16.6 8.4 15.8 7.6 14.6 7.6 H12.6"/><path d="M9 12.6 V1.4 M5.4 4.8 L9 1.2 L12.6 4.8"/></g></svg>
<svg style="left:552.8px;top:345.20px" width="7.4" height="1.8" viewBox="0 0 7.4 1.8"><g fill="#666"><circle cx=".9" cy=".9" r=".8"/><circle cx="3.7" cy=".9" r=".8"/><circle cx="6.5" cy=".9" r=".8"/></g></svg>
<svg style="left:71.6px;top:367.80px" width="15.6" height="15" viewBox="0 0 15.6 15">
<path d="M4.4 .4 H11.3 L14.9 4 V13.6 C14.9 14.2 14.5 14.6 13.9 14.6 H4.4 C3.8 14.6 3.4 14.2 3.4 13.6 V1.4 C3.4 .8 3.8 .4 4.4 .4 Z" fill="#fff" stroke="#cbcbcb" stroke-width=".7"/>
<path d="M11.3 .4 V3 C11.3 3.6 11.7 4 12.3 4 H14.9" fill="#f3f3f3" stroke="#cbcbcb" stroke-width=".7" stroke-linejoin="round"/>
<rect x="9.2" y="5.6" width="4.2" height="1.3" fill="#7fb0ea"/><rect x="9.2" y="7.4" width="4.2" height="1.3" fill="#b5d2f4"/><rect x="9.2" y="9.4" width="4.2" height="1.2" fill="#3f7fd6"/>
<rect x="0" y="4.7" width="8.2" height="7.2" rx=".9" fill="#1b5cbe"/>
<text x="4.1" y="10.4" font-family="Liberation Sans, sans-serif" font-size="5.6" font-weight="700" fill="#fff" text-anchor="middle">W</text>
</svg>
<div class="t" id="r5t" style="left:94px;top:367.90px;font-size:8.2px;color:#2b2b2b;font-weight:400;letter-spacing:-0.228px;-webkit-text-stroke:.1px #2b2b2b;">QT4000 Release Guide</div>
<div class="t" id="r5s" style="left:94px;top:377.13px;font-size:6.1px;color:#8a8a8a;font-weight:400;letter-spacing:-0.014px;">OneDrive &ndash; Contoso &middot; Private Files</div>
<div class="t" id="r5d" style="left:293.8px;top:372.33px;font-size:6.1px;color:#6c6c6c;font-weight:400;letter-spacing:0.010px;">Oct 21</div>
<svg style="left:391.6px;top:370.20px" width="7.4" height="9.4" viewBox="0 0 14.8 18.8"><g fill="none" stroke="#5e5e5e" stroke-width="1.7"><circle cx="7.4" cy="4.4" r="3.4"/><path d="M2.6 11 H12.2 C13.4 11 14 11.8 14 12.8 C14 16 11.4 18 7.4 18 C3.4 18 .8 16 .8 12.8 C.8 11.8 1.4 11 2.6 11 Z"/></g></svg>
<div class="t" id="r5h" style="left:404.3px;top:372.33px;font-size:6.1px;color:#6c6c6c;font-weight:400;letter-spacing:0.052px;">Only me</div>
<svg style="left:507.9px;top:370.60px" width="9" height="9" viewBox="0 0 19.2 19.2"><path d="M11.6 1.6 C12.2 1 13 1 13.6 1.6 L17.6 5.6 C18.2 6.2 18.2 7 17.6 7.6 L16.4 8.6 L13.2 11.8 L12.8 15.4 L11.4 16.8 L2.4 7.8 L3.8 6.4 L7.4 6 L10.6 2.8 Z M6.8 12.4 L1 18.2" fill="none" stroke="#5a5a5a" stroke-width="1.6" stroke-linejoin="round" stroke-linecap="round"/></svg>
<svg style="left:529.7px;top:370.40px" width="8.4" height="9.5" viewBox="0 0 18 20"><g fill="none" stroke="#5a5a5a" stroke-width="1.7" stroke-linecap="round" stroke-linejoin="round"><path d="M5.4 7.6 H3.4 C2.2 7.6 1.4 8.4 1.4 9.6 V16.6 C1.4 17.8 2.2 18.6 3.4 18.6 H14.6 C15.8 18.6 16.6 17.8 16.6 16.6 V9.6 C16.6 8.4 15.8 7.6 14.6 7.6 H12.6"/><path d="M9 12.6 V1.4 M5.4 4.8 L9 1.2 L12.6 4.8"/></g></svg>
<svg style="left:552.8px;top:374.70px" width="7.4" height="1.8" viewBox="0 0 7.4 1.8"><g fill="#666"><circle cx=".9" cy=".9" r=".8"/><circle cx="3.7" cy=".9" r=".8"/><circle cx="6.5" cy=".9" r=".8"/></g></svg>
<svg style="left:71.6px;top:397.30px" width="15.6" height="15" viewBox="0 0 15.6 15">
<path d="M4.4 .4 H11.3 L14.9 4 V13.6 C14.9 14.2 14.5 14.6 13.9 14.6 H4.4 C3.8 14.6 3.4 14.2 3.4 13.6 V1.4 C3.4 .8 3.8 .4 4.4 .4 Z" fill="#fff" stroke="#cbcbcb" stroke-width=".7"/>
<path d="M11.3 .4 V3 C11.3 3.6 11.7 4 12.3 4 H14.9" fill="#f3f3f3" stroke="#cbcbcb" stroke-width=".7" stroke-linejoin="round"/>
<rect x="9.2" y="5.6" width="4.2" height="1.3" fill="#7fb0ea"/><rect x="9.2" y="7.4" width="4.2" height="1.3" fill="#b5d2f4"/><rect x="9.2" y="9.4" width="4.2" height="1.2" fill="#3f7fd6"/>
<rect x="0" y="4.7" width="8.2" height="7.2" rx=".9" fill="#1b5cbe"/>
<text x="4.1" y="10.4" font-family="Liberation Sans, sans-serif" font-size="5.6" font-weight="700" fill="#fff" text-anchor="middle">W</text>
</svg>
<div class="t" id="r6t" style="left:94px;top:397.40px;font-size:8.2px;color:#2b2b2b;font-weight:400;letter-spacing:-0.149px;-webkit-text-stroke:.1px #2b2b2b;">Contoso Annual Report</div>
<div class="t" id="r6s" style="left:94px;top:406.63px;font-size:6.1px;color:#8a8a8a;font-weight:400;letter-spacing:0.000px;">OneDrive &ndash; Contoso &middot; Reports</div>
<div class="t" id="r6d" style="left:293.8px;top:401.83px;font-size:6.1px;color:#6c6c6c;font-weight:400;letter-spacing:0.209px;">Oct 19</div>
<svg style="left:390.6px;top:400.00px" width="9.2" height="8.8" viewBox="0 0 18.4 17.6"><g fill="none" stroke="#5e5e5e" stroke-width="1.7"><circle cx="5.4" cy="3.8" r="2.9"/><circle cx="13.8" cy="4.4" r="2.2"/><rect x=".8" y="9.6" width="10.4" height="7.2" rx="3.4"/><path d="M12.4 10.8 H15 C16.6 10.8 17.6 12 17.6 13.4 C17.6 15 16.6 16.2 15 16.2 H13"/></g></svg>
<div class="t" id="r6h" style="left:404.3px;top:401.83px;font-size:6.1px;color:#6c6c6c;font-weight:400;letter-spacing:0.068px;">Shared</div>
<svg style="left:507.9px;top:400.10px" width="9" height="9" viewBox="0 0 19.2 19.2"><path d="M11.6 1.6 C12.2 1 13 1 13.6 1.6 L17.6 5.6 C18.2 6.2 18.2 7 17.6 7.6 L16.4 8.6 L13.2 11.8 L12.8 15.4 L11.4 16.8 L2.4 7.8 L3.8 6.4 L7.4 6 L10.6 2.8 Z M6.8 12.4 L1 18.2" fill="none" stroke="#5a5a5a" stroke-width="1.6" stroke-linejoin="round" stroke-linecap="round"/></svg>
<svg style="left:529.7px;top:399.90px" width="8.4" height="9.5" viewBox="0 0 18 20"><g fill="none" stroke="#5a5a5a" stroke-width="1.7" stroke-linecap="round" stroke-linejoin="round"><path d="M5.4 7.6 H3.4 C2.2 7.6 1.4 8.4 1.4 9.6 V16.6 C1.4 17.8 2.2 18.6 3.4 18.6 H14.6 C15.8 18.6 16.6 17.8 16.6 16.6 V9.6 C16.6 8.4 15.8 7.6 14.6 7.6 H12.6"/><path d="M9 12.6 V1.4 M5.4 4.8 L9 1.2 L12.6 4.8"/></g></svg>
<svg style="left:552.8px;top:404.20px" width="7.4" height="1.8" viewBox="0 0 7.4 1.8"><g fill="#666"><circle cx=".9" cy=".9" r=".8"/><circle cx="3.7" cy=".9" r=".8"/><circle cx="6.5" cy=".9" r=".8"/></g></svg>
</div></div>
<svg style="left:0;top:0" width="600" height="432" viewBox="0 0 600 432"><path fill-rule="evenodd" d="M28.5 -0.9 H575.4 A28 28 0 0 1 603.4 27.1 V405 A28 28 0 0 1 575.4 433 H28.5 A28 28 0 0 1 0.5 405 V27.1 A28 28 0 0 1 28.5 -0.9 Z M34.0 23.3 H569.0 A8.5 8.5 0 0 1 577.5 31.8 V397.8 A8.5 8.5 0 0 1 569.0 406.3 H34.0 A8.5 8.5 0 0 1 25.5 397.8 V31.8 A8.5 8.5 0 0 1 34.0 23.3 Z" fill="#8b8d92"/>
<path fill-rule="evenodd" d="M28.3 0.2 H575.6 A26.6 26.6 0 0 1 602.2 26.8 V403.09999999999997 A26.6 26.6 0 0 1 575.6 429.7 H28.3 A26.6 26.6 0 0 1 1.7 403.09999999999997 V26.8 A26.6 26.6 0 0 1 28.3 0.2 Z M34.0 23.3 H569.0 A8.5 8.5 0 0 1 577.5 31.8 V397.8 A8.5 8.5 0 0 1 569.0 406.3 H34.0 A8.5 8.5 0 0 1 25.5 397.8 V31.8 A8.5 8.5 0 0 1 34.0 23.3 Z" fill="#111"/>
</svg>
</body></html>
